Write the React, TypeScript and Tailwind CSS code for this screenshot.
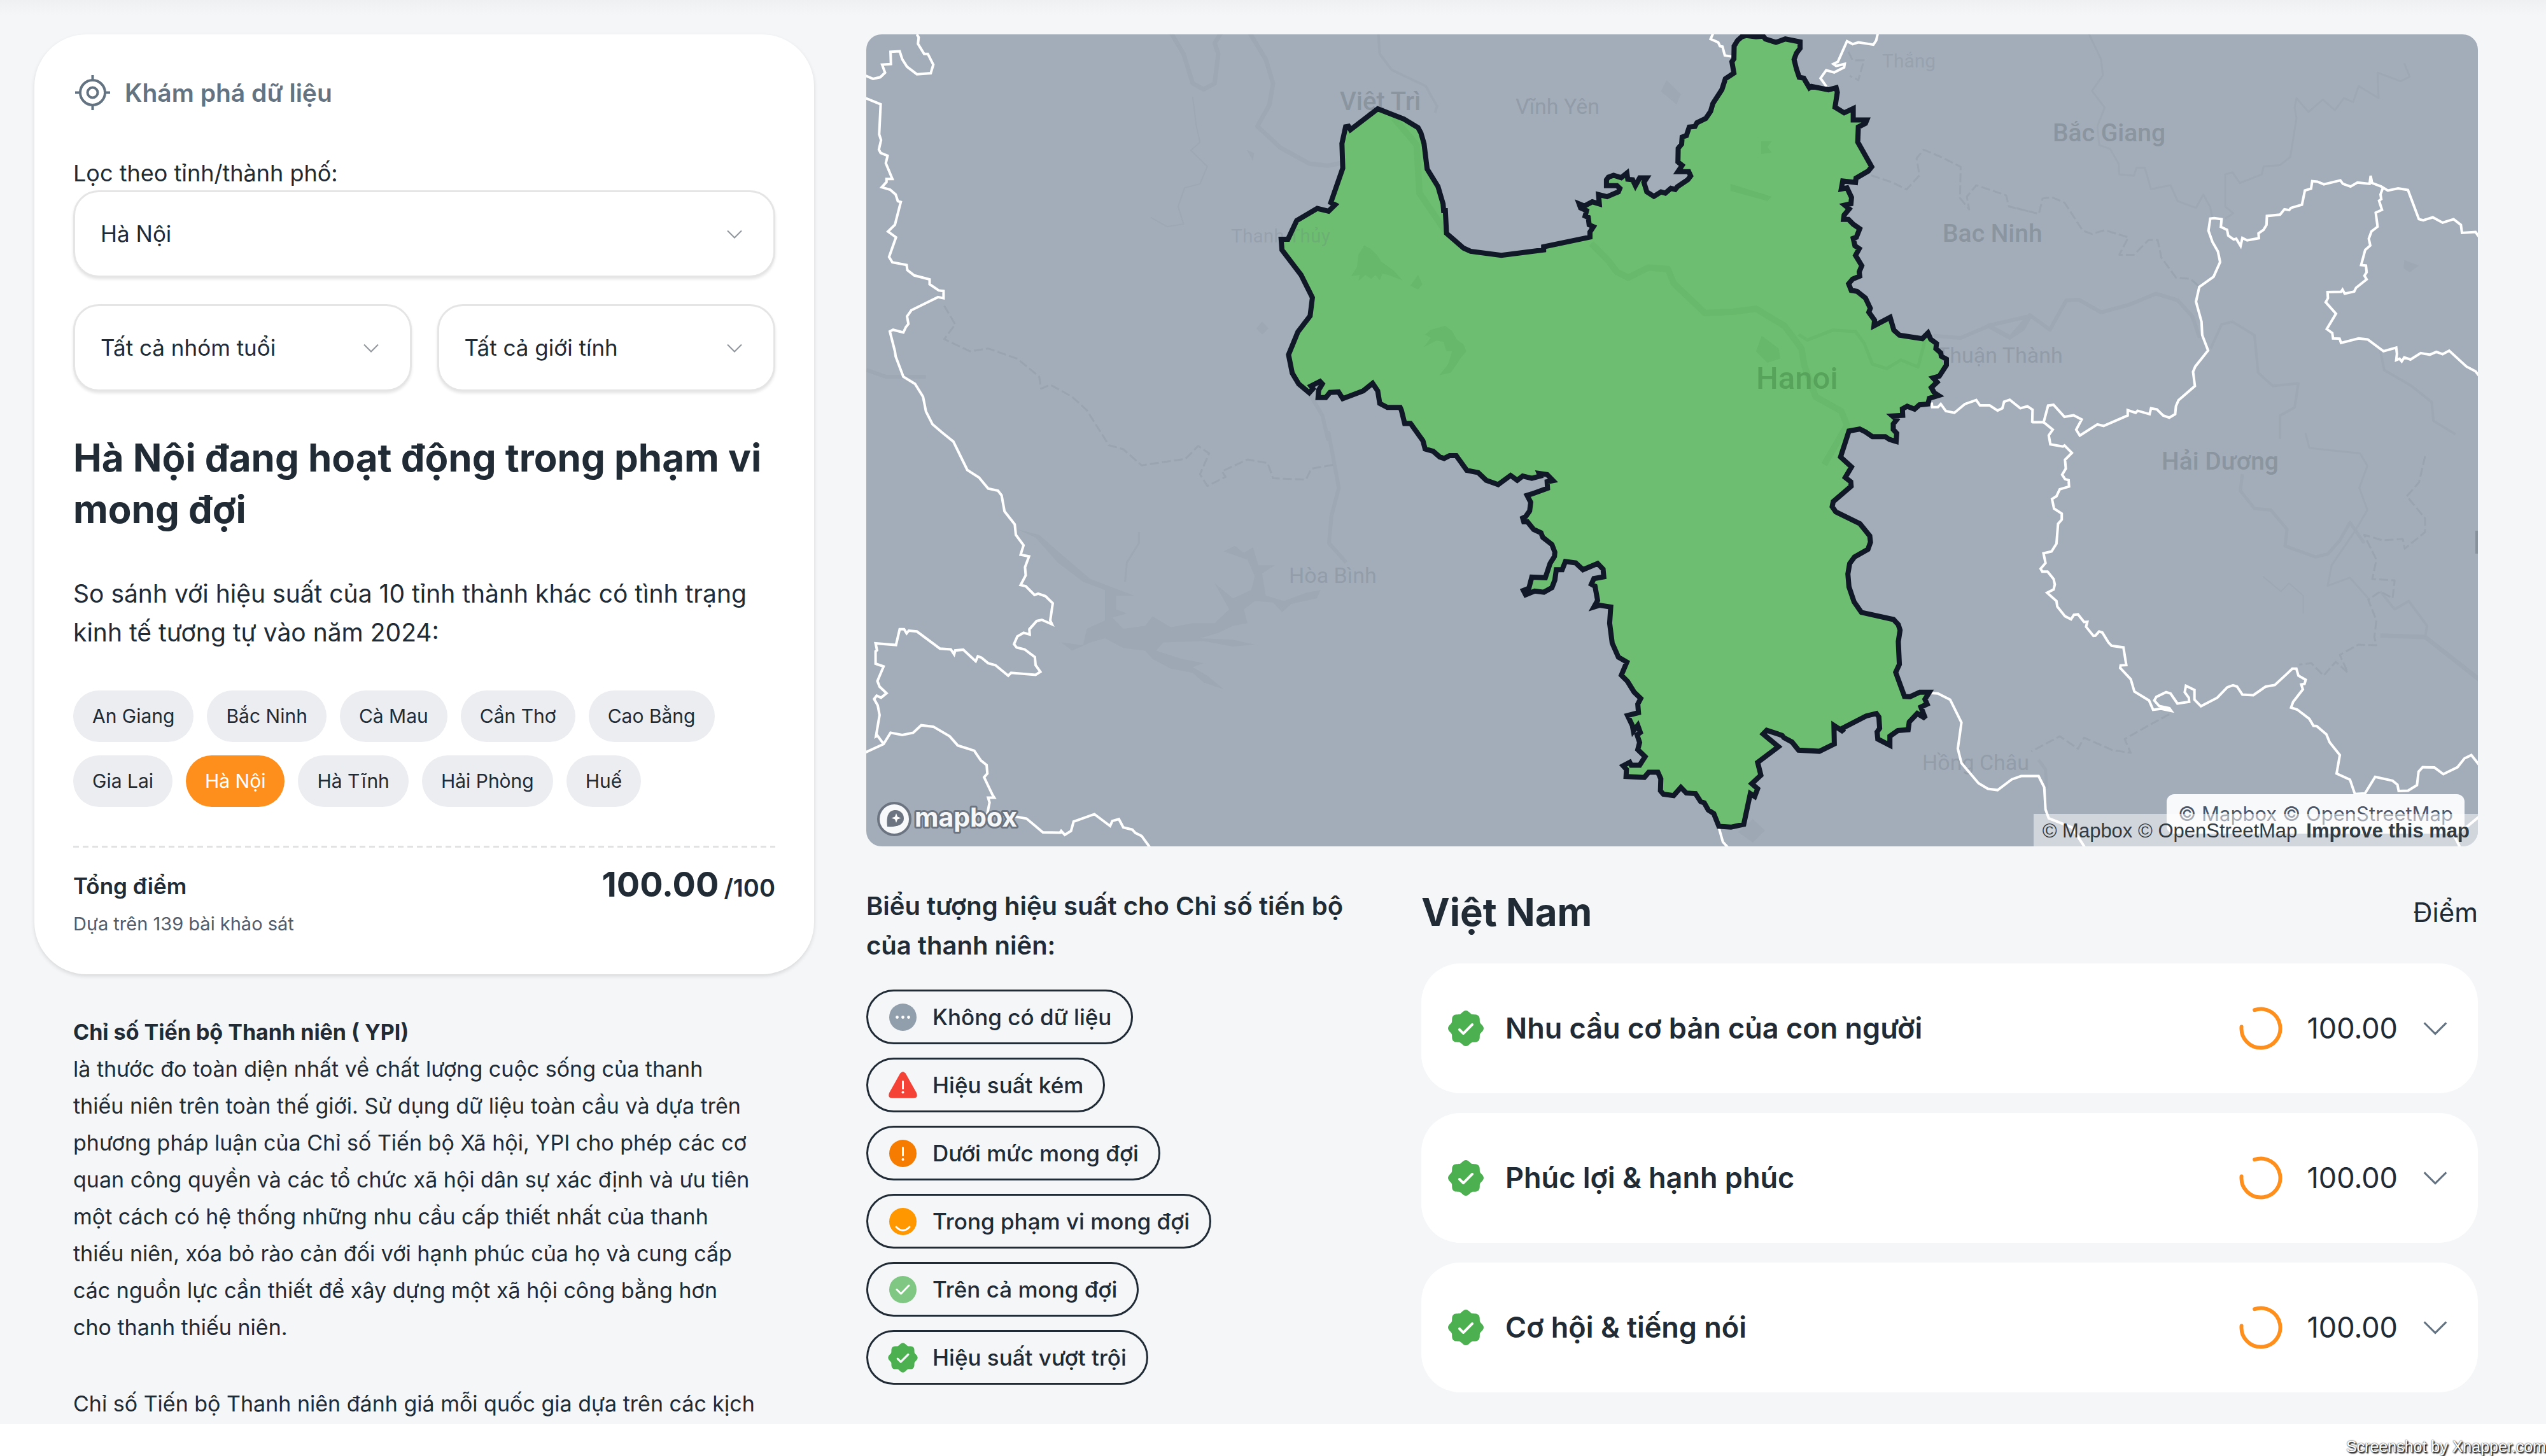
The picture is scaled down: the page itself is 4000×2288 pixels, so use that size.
import React from "react";
import { PiSealCheckFill } from "react-icons/pi";

/* ---------- Map geometry ---------- */

type Tile = [x: number, y: number, sx: number, sy: number];

// Survey sheets: origin and unit size of each sheet on the map canvas.
const NW: Tile = [1340, 30, 0.574, 0.4209];
const N: Tile = [1940, 30, 0.4464, 0.4209];
const CENTER: Tile = [2500, 30, 0.4464, 0.4464];
const S: Tile = [2200, 640, 0.574, 0.4464];
const NE: Tile = [3100, 30, 0.574, 0.4209];
const SE: Tile = [3000, 680, 0.6378, 0.4337];
const SW: Tile = [1340, 680, 0.574, 0.4337];

type Piece = [Tile, string];

const project = (pieces: Piece[]) =>
  pieces
    .map(([[ox, oy, sx, sy], pts]) =>
      pts
        .trim()
        .split(/\s+/)
        .map((p) => {
          const [x, y] = p.split(",").map(Number);
          return `${(ox + x * sx).toFixed(1)},${(oy + y * sy).toFixed(1)}`;
        })
        .join(" ")
    )
    .join(" ");

const HANOI: Piece[] = [
  [N, "503,335 595,373 645,405 655,425 666,465 677,560 715,625 733,690 735,715 741,715 745,800 805,855 830,867 938,882 1087,862 1087,850 1250,814 1250,795 1262,775 1247,768 1244,740 1233,735 1238,715 1217,705 1212,690 1230,698 1258,682 1283,690 1280,655 1310,663 1350,645 1355,632 1345,622 1308,622 1308,600 1315,590 1333,583 1360,592 1380,575 1383,598 1400,600 1410,622 1425,593 1450,593 1440,610 1450,645 1475,662 1500,645 1515,650 1535,632 1550,636"],
  [CENTER, "303,590 340,565 350,552 343,537 305,537 320,515 305,503 306,455 318,440 320,415 335,410 345,380 365,378 372,365 403,350 420,325 428,297 460,248 472,210 502,190 495,150 502,140 503,95 515,75 530,62 545,58 580,62 605,60 613,70 650,82 683,70 735,80 735,103 722,120 714,142 722,175 732,205 748,208 768,242 775,237 835,249 862,242 866,258 858,310 890,330 922,315 922,355 970,355 965,367 940,380 938,433 987,520 975,535 932,560 930,575 885,570 880,598 900,594 916,628 914,650 892,655 908,668 890,690 888,705 905,705 922,722 945,738 933,768 922,772 928,798 943,808 930,832 952,868 943,890 945,905 920,915 906,932 915,955 935,958 965,982 982,1018 977,1032 997,1060 995,1080 1052,1050 1065,1095 1085,1113 1165,1125 1185,1105 1195,1127 1215,1142 1213,1160 1230,1175 1232,1187 1250,1197 1250,1218 1225,1257 1203,1263 1217,1278 1197,1297 1207,1315 1222,1325 1190,1335 1185,1355 1155,1358 1138,1373 1112,1363 1095,1372 1096,1395 1060,1397 1075,1410 1063,1425 1063,1445 1075,1458 1073,1487 1050,1480 1035,1470 990,1470 965,1453 945,1443 907,1450"],
  [S, "1205,175 1235,210 1218,247 1233,262 1234,278 1185,332 1182,350 1192,368 1258,410 1285,453 1287,475 1280,500 1243,527 1230,550 1225,587 1228,632 1242,685 1262,722 1350,747 1363,765 1368,785 1363,825 1366,905 1356,933 1380,1018 1395,1019 1422,1003 1448,1003 1436,1028 1442,1045 1425,1055 1437,1095 1415,1078 1393,1108 1390,1135 1362,1138 1340,1158 1340,1190 1307,1168 1305,1143 1312,1130 1310,1090 1303,1078 1275,1087 1210,1130 1213,1142 1187,1120 1188,1185 1147,1211 1090,1207 1072,1178 1050,1163 1045,1155 1003,1137 993,1150 1035,1195 978,1250 987,1295 962,1325 978,1343 970,1370 958,1360 940,1468 905,1478 872,1475 858,1430 843,1418 832,1393 822,1388 808,1360 783,1358 768,1338 748,1367 720,1362 712,1350 713,1308 705,1285 680,1285 668,1303 618,1300 619,1275 610,1262 628,1250 632,1260 655,1260 670,1230 650,1205 655,1180 648,1153 657,1145 650,1120 638,1140 635,1120 622,1085 652,1075 650,1045 658,1025 640,1003 622,965 605,943 620,897 597,880 580,830 573,760 576,703 545,697 530,703 540,680 533,630 523,623 530,603 557,597 555,570 540,550 500,572 480,548 452,543 443,572 427,572 423,608 415,635 393,651 368,647 343,660 337,645 352,637 360,598 397,600 410,550 422,525 423,510 415,483 390,458 385,442 365,430 348,403 338,403 335,390 343,385 354,365 357,335 347,310 360,305 403,285 402,262 418,258 402,237 380,233 383,242 360,250 335,242 320,257 302,240 268,272 235,257 213,230 182,222 153,170 135,170 120,180 108,175 90,155 68,147 62,118 28,57 12,57 3,10"],
  [N, "582,1450 537,1450 510,1435 503,1388 485,1360 452,1388 380,1417 365,1392 335,1394 320,1413 293,1413 295,1385 308,1362 300,1353 268,1370 275,1380 262,1395 225,1362 202,1322 189,1253 222,1168 265,1108 273,1040 233,955 166,862 163,822 187,822 218,752 290,707 330,717 353,693 338,685 380,557 377,465 390,402 400,400 407,413"],
];

const PROVINCE_BORDERS: Piece[][] = [
  [[NW, "175,57 180,68 178,92 195,130 205,130 220,170 213,202 175,206 148,178 135,150 128,120 103,122 104,168 80,170 88,200 75,217 55,223 33,210"]],
  [
    [NW, "33,294 76,318 72,430 77,452 71,487 76,500 95,510 90,538 108,597 92,597 92,608 79,628 102,637 117,655 123,680 131,683 115,768 96,793 118,815 99,888 108,908 147,918 149,937 168,957 210,972 210,990 235,1013 248,1015 248,1042 233,1038 160,1087 148,1110 152,1138 145,1150 138,1170 110,1160 101,1166 115,1240 117,1260 138,1335 170,1362 192,1410 200,1465 218,1513"],
    [SW, "245,0 275,32 313,135 345,162 370,202 397,210 407,227 415,285 443,332 446,370 467,408 459,442 482,448 471,487 473,517 459,552 473,556 497,588 507,583 527,592 547,618 540,680 545,694 517,678 503,682 483,712 484,731 467,725 450,738 441,766 448,778 470,785 498,813 500,842 513,866 500,877 433,870 425,880 390,842 370,835 352,815 342,810 336,828 302,786 280,789 277,803 268,785 238,782 175,720 153,717 147,727 140,712 128,712 118,769 62,763 66,788 62,792 62,837 84,847 67,900 73,920 92,944 77,960 65,953 58,965 68,988 73,1023 63,1100 67,1097 84,1128"],
  ],
  [[SW, "30,1161 84,1128 103,1087 135,1095 165,1087 187,1060 220,1065 265,1100 287,1133 332,1152 350,1187 366,1204 368,1235 359,1248 382,1312 387,1322 370,1322 374,1340 367,1385 440,1390 475,1398 520,1448 567,1449 570,1443 580,1457 597,1443 604,1409 661,1382 704,1425 710,1407 728,1400 740,1430 765,1438 773,1450 790,1461 815,1506"]],
  [[CENTER, "430,48 420,70 447,82 453,95 462,97 470,128 495,132"]],
  [[CENTER, "1009,48 1003,75 993,90 940,82 920,88 900,78 868,150 852,158 862,165 892,158 890,170 855,188 827,180 807,208 828,238"]],
  [
    [CENTER, "1198,1350 1200,1366 1220,1366 1230,1355 1248,1380 1278,1386 1315,1355 1355,1341 1368,1360 1402,1360 1430,1378 1447,1370 1453,1347 1473,1340 1510,1370 1535,1363 1553,1375 1552,1418"],
    [NE, "163,1505 193,1505 205,1443 220,1440 250,1485 275,1479 297,1495 282,1533 292,1555 340,1513 357,1519 423,1480 423,1460 445,1470 450,1462 483,1475 487,1453 503,1457 520,1480 537,1488 553,1475 555,1445 562,1423 607,1370 602,1317 608,1297 643,1237 627,1180 625,1130 610,1055 619,1000 658,962 676,907 670,868 655,832 644,790 649,745 660,743 680,747 678,776 695,787 698,808 713,823 720,820 732,847 737,817 750,826 782,818 781,800 795,787 803,768 804,735 840,730 852,710 865,713 870,705 900,693 908,640 925,633 928,605 942,607 960,617 1005,602 1012,615 1033,625 1052,610 1085,615 1088,585 1092,612 1117,625 1135,640 1163,632 1190,638 1220,747 1232,751 1258,740 1285,760 1315,747 1335,768 1338,798 1375,795 1386,816"],
  ],
  [[NE, "1122,628 1115,655 1117,672 1111,678 1119,712 1102,723 1107,775 1090,793 1083,820 1087,845 1073,862 1062,918 1075,920 1077,945 1071,958 1077,972 1048,1003 1043,1017 1017,1025 1011,1010 1007,1018 970,1019 971,1042 965,1057 993,1100 968,1157 983,1172 985,1192 1003,1193 1007,1209 1055,1192 1080,1196 1123,1240 1158,1227 1160,1250 1158,1273 1167,1268 1173,1278 1180,1263 1197,1271 1225,1247 1250,1253 1268,1242 1285,1251 1303,1238 1350,1297 1375,1315 1386,1334"]],
  [
    [NE, "193,1505 218,1533 208,1552"],
    [SE, "343,10 347,42 378,50 382,46 400,73 383,98 385,130 376,152 383,168 392,172 393,195 370,205 362,230 351,240 356,275 375,293 375,315 366,330 362,402 350,430 330,437 335,472 323,493 327,503 340,503 355,530 358,550 355,568 339,580 362,610 364,630 383,665 398,676 405,660 415,658 430,686 438,685 435,703 453,736 458,735 467,720 475,724 490,760 498,772 527,778 534,842 520,843 519,852 545,893 554,938 590,970 600,1004 620,1000 645,1008 640,998 615,990 603,970 608,957 632,940 643,945 660,981 689,975 688,960 678,940 681,917 702,932 702,967 718,991 758,960 783,922 797,915 807,920 820,949 847,951 877,920 900,914 930,873 943,855 953,855 958,880 976,895 973,910 965,912 969,930 945,975 940,996 955,1003 985,1037 995,1062 1003,1063 1027,1093 1035,1122 1060,1168 1052,1235 1085,1257 1097,1309 1122,1307 1147,1247 1190,1261 1202,1275 1205,1298 1228,1297 1250,1277 1254,1228 1264,1212 1293,1213 1315,1237 1350,1212 1367,1180 1384,1168 1404,1205"],
  ],
  [[SE, "52,943 70,945 100,967 128,1050 119,1145 128,1197 170,1270 193,1290 217,1295 252,1256 275,1244 318,1244 332,1285 335,1365 343,1397 400,1430 433,1505"]],
  [[SE, "1404,1390 1375,1425 1340,1455 1357,1505"]],
  [[S, "872,1480 883,1530 897,1550"]],
];

const RIVERS: { w: number; d: Piece[] }[] = [
  { w: 7, d: [[NW, "870,50 905,130 930,240 960,262 990,240 1000,130 990,90 1008,50"]] },
  { w: 7, d: [[NW, "1085,50 1130,150 1150,240 1140,320 1107,400 1170,480 1250,540 1300,547 1345,535"]] },
  { w: 4, d: [[NW, "1438,50 1442,130 1475,190 1568,250"], [N, "690,285 712,325 705,350"]] },
  { w: 2, d: [[NW, "930,290 940,400 950,460 925,490 970,550 950,615 908,630 890,700 905,765 860,775 815,740"]] },
  { w: 6, d: [[NW, "1250,1400 1285,1480 1300,1568"], [SW, "1302,0 1330,200 1310,300 1303,400 1350,470"]] },
  { w: 6, d: [[NW, "37,1310 90,1335 200,1335"]] },
  { w: 3, d: [[SW, "783,360 783,400 750,470 745,540"]] },
  { w: 6, d: [[CENTER, "1205,1115 1300,1122 1400,1080 1475,1120 1520,1090 1545,1045"], [NE, "40,1145 100,1190 155,1105 210,1160 255,1050 290,1048 350,1095 430,1065 500,1025 560,1050 600,1110 620,1190"]] },
  { w: 3, d: [[NE, "315,50 350,150 355,210 325,268 360,330 340,400 345,470 375,485 398,540 400,580 440,585 447,555 470,555 487,635 540,620 560,680 610,705 630,655 648,700 655,740"]] },
  { w: 3, d: [[NE, "690,745 712,725 690,700 690,580 710,572 730,612 790,580 795,550 840,545 868,515 885,370 880,330 885,295 918,347 957,300 990,340 1015,295 1040,310 1055,250 1110,295 1107,200 1170,232 1195,215 1180,165"]] },
  { w: 4, d: [[NE, "650,1230 680,1140 710,1130 770,1180 780,1320 820,1370 890,1360 880,1450 840,1480 840,1568"]] },
  { w: 4, d: [[NE, "1115,1240 1125,1310 1200,1370 1255,1430 1260,1500 1320,1550"]] },
  { w: 5, d: [[SE, "820,150 815,210 850,275 890,280 930,350 925,410 1000,450 1030,440 1060,390 1085,325 1120,400"]] },
  { w: 3, d: [[SE, "975,0 985,55 1110,75 1128,120 1108,200 1128,280 1100,350 1040,480 1030,555 1085,525 1130,600"]] },
  { w: 7, d: [[SE, "1160,735 1270,740 1404,895"]] },
  { w: 4, d: [[SE, "1270,740 1275,700 1230,610 1195,640 1160,575"]] },
  { w: 2, d: [[SE, "870,520 915,575 935,545 970,590 970,655"]] },
  { w: 5, d: [[SE, "318,1185 335,1220 338,1290"]] },
];

const DISTRICTS: Piece[][] = [
  [[NW, "250,1070 280,1140 250,1195 320,1240 370,1230 450,1268 510,1335 515,1380 540,1365 600,1410 640,1460 690,1568"], [SW, "700,45 740,60 790,118 910,95 945,48 975,75 950,150 970,193 1020,160 1010,140 1080,97 1135,110 1150,165 1240,170 1255,130 1320,115"]],
  [[CENTER, "985,550 1060,575 1110,600 1155,550 1145,490 1170,460 1230,485 1300,520 1298,630 1330,670 1322,625 1355,585 1460,620 1470,660 1560,682"], [NE, "100,700 180,727 190,670 215,665 250,685 300,790 325,802 360,788 425,815 400,880 440,880 480,825 505,825 515,890 555,965 595,970 620,1000"]],
  [[SE, "1270,85 1255,180 1225,230 1270,310 1270,360 1220,420 1215,385 1165,390 1120,370 1150,460 1140,530 1195,535 1190,600 1160,575 1130,605 1150,680 1145,740 1150,770 1105,768 1060,805 1080,870 1050,830 1020,880 990,835 960,840"]],
  [[SE, "640,1020 590,1060 530,1110 545,1160 500,1150 430,1105 415,1145 370,1100 300,1155"]],
  [[CENTER, "905,115 920,145 960,145 940,215 910,200"]],
];

const LAKES: Piece[][] = [
  [[SW, "450,350 510,370 570,440 650,530 710,560 770,590 720,590 720,640 750,655 710,670 740,710 800,700 820,665 870,705 930,690 990,690 1030,640 990,545 1040,600 1090,570 1100,520 1080,460 1015,430 1045,410 1070,435 1095,415 1110,480 1155,480 1120,510 1130,590 1180,610 1240,580 1280,570 1270,600 1200,620 1175,650 1150,615 1100,610 1070,640 1080,690 1040,700 1000,725 950,745 1040,750 1100,768 1040,775 960,755 850,760 830,790 900,820 960,835 930,850 970,880 1015,930 960,905 930,870 870,855 820,820 800,790 740,780 690,745 650,760 600,790 570,760 630,770 640,710 690,680 690,600 690,570 630,540 560,470 500,380"]],
  [[CENTER, "265,215 315,265 300,300 245,255"]],
  [[NE, "1180,900 1220,920 1195,945 1178,930"]],
  [[S, "965,1450 998,1490 965,1532 925,1495"]],
  [[NW, "1078,488 1098,500 1095,530"]],
  [[NW, "1120,1130 1138,1155 1120,1178 1104,1155"]],
];

const GREEN_RIVERS: { w: number; d: Piece[] }[] = [
  { w: 10, d: [[CENTER, "0,790 60,850 90,890 130,910 200,875 270,880 290,930 400,1035 500,1030 580,1020 680,1080 740,1160 750,1220 790,1330 880,1380 900,1430 860,1500 820,1568"]] },
  { w: 5, d: [[CENTER, "730,1110 760,1130 850,1095 930,1100 960,1140 990,1215 1040,1230 1090,1200 1150,1225 1175,1130"]] },
  { w: 10, d: [[N, "560,370 640,470 650,650 740,790"]] },
];

const GREEN_LAKES: Piece[][] = [
  [[CENTER, "600,1115 660,1160 665,1195 620,1210 580,1170"]],
  [[CENTER, "490,580 635,625 620,640 490,605"]],
  [[CENTER, "598,430 635,430 620,450 635,470 598,475"]],
  [[N, "455,845 475,855 500,880 515,905 560,940 590,975 565,965 540,955 520,950 510,975 495,955 480,970 460,955 435,978 440,955 410,960 430,925 435,880"]],
  [[N, "690,1160 740,1145 765,1165 780,1195 805,1215 815,1240 795,1265 780,1290 760,1320 720,1330 750,1290 765,1240 745,1240 735,1205 710,1200 665,1225 690,1190 670,1178"]],
  [[N, "645,955 660,990 645,1010 618,995"]],
];

const PLACES: { name: string; x: number; y: number; size: number; fill: string }[] = [
  { name: "Việt Trì", x: 2105, y: 173, size: 40, fill: "#8a95a0" },
  { name: "Vĩnh Yên", x: 2381, y: 179, size: 34, fill: "#919ca8" },
  { name: "Thanh Thủy", x: 1934, y: 381, size: 30, fill: "#6b7a8438" },
  { name: "Thắng", x: 2957, y: 106, size: 30, fill: "#97a2ae" },
  { name: "Bắc Giang", x: 3225, y: 222, size: 39, fill: "#8a95a0" },
  { name: "Bac Ninh", x: 3052, y: 380, size: 39, fill: "#8a95a0" },
  { name: "Thuận Thành", x: 3043, y: 570, size: 34, fill: "#919ca8" },
  { name: "Hải Dương", x: 3396, y: 738, size: 39, fill: "#8a95a0" },
  { name: "Hồng Châu", x: 3020, y: 1210, size: 34, fill: "#929da9" },
  { name: "Hòa Bình", x: 2025, y: 916, size: 34, fill: "#929da9" },
  { name: "Hanoi", x: 2759, y: 611, size: 49, fill: "#57a35b" },
];

function ProvinceMap() {
  return (
    <svg
      viewBox="1361 54 2532 1276"
      preserveAspectRatio="xMidYMid slice"
      className="block h-full w-full"
      role="img"
      aria-label="Bản đồ Hà Nội"
      fontFamily="Roboto, sans-serif"
    >
      <rect x="1361" y="54" width="2532" height="1276" fill="#a3adb9" />
      {LAKES.map((p, i) => (
        <polygon key={i} points={project(p)} fill="#9da8b4" />
      ))}
      <g fill="none" stroke="#9da8b4" strokeLinejoin="round">
        {RIVERS.map((r, i) => (
          <polyline key={i} points={project(r.d)} strokeWidth={r.w} />
        ))}
        {DISTRICTS.map((p, i) => (
          <polyline key={i} points={project(p)} stroke="#99a4b0" strokeWidth="3" strokeDasharray="14 5" />
        ))}
      </g>
      <polygon points={project(HANOI)} fill="#6dbe70" />
      <g fill="none" stroke="#68b96b" strokeLinejoin="round">
        {GREEN_RIVERS.map((r, i) => (
          <polyline key={i} points={project(r.d)} strokeWidth={r.w} />
        ))}
      </g>
      {GREEN_LAKES.map((p, i) => (
        <polygon key={i} points={project(p)} fill="#67b86a" />
      ))}
      {PLACES.map((p) => (
        <text key={p.name} x={p.x} y={p.y} fontSize={p.size} fill={p.fill} fontWeight={p.size > 38 ? 500 : 400}>
          {p.name}
        </text>
      ))}
      <g fill="none" stroke="#ffffff" strokeWidth="4" strokeLinejoin="miter">
        {PROVINCE_BORDERS.map((p, i) => (
          <polyline key={i} points={project(p)} />
        ))}
      </g>
      <polygon points={project(HANOI)} fill="none" stroke="#111827" strokeWidth="8" strokeMiterlimit="3" />
      <rect x="3889" y="834" width="4" height="36" fill="#87929d" />
    </svg>
  );
}

/* ---------- Icons ---------- */

function TargetIcon() {
  return (
    <svg viewBox="0 0 61 61" className="size-[61px]" fill="none" stroke="currentColor" strokeWidth="4" aria-hidden="true">
      <circle cx="30.5" cy="30.5" r="19.5" />
      <circle cx="30.5" cy="30.5" r="8" />
      <path d="M30.5 3v8M30.5 50v8M3 30.5h8M50 30.5h8" />
    </svg>
  );
}

function Chevron({ className }: { className: string }) {
  return (
    <svg viewBox="0 0 24 14" className={className} fill="none" stroke="currentColor" strokeWidth="2" aria-hidden="true">
      <path d="M1 1.5l11 11 11-11" />
    </svg>
  );
}

type Level = "none" | "poor" | "below" | "within" | "above" | "over";

function LevelIcon({ level }: { level: Level }) {
  if (level === "over") return <PiSealCheckFill className="size-[53px] text-[#4caf50]" aria-hidden="true" />;
  return (
    <svg viewBox="-26.5 -26.5 53 53" className="size-[53px]" aria-hidden="true" stroke="#fff" strokeWidth="3" strokeLinecap="round" strokeLinejoin="round" fill="none">
      {level === "none" && (
        <>
          <circle r="21.5" fill="#919eab" stroke="none" />
          <g fill="#fff" stroke="none">
            <circle cx="-9" r="2.4" />
            <circle r="2.4" />
            <circle cx="9" r="2.4" />
          </g>
        </>
      )}
      {level === "poor" && (
        <>
          <path d="M-5 -17.5Q0 -25 5 -17.5L21.5 12Q24.5 20 16.5 20H-16.5Q-24.5 20 -21.5 12Z" fill="#f44336" stroke="none" />
          <path d="M0 -6V5" />
          <circle cy="11" r="2" fill="#fff" stroke="none" />
        </>
      )}
      {level === "below" && (
        <>
          <circle r="21.5" fill="#f57c00" stroke="none" />
          <path d="M0 -9V3" />
          <circle cy="9.5" r="2" fill="#fff" stroke="none" />
        </>
      )}
      {level === "within" && (
        <>
          <circle r="21.5" fill="#ff9800" stroke="none" />
          <path d="M-10.5 8.5Q0 19.5 10.5 8.5" />
        </>
      )}
      {level === "above" && (
        <>
          <circle r="21.5" fill="#81c784" stroke="none" />
          <path d="M-9.5 0L-3 6.5L9.5 -6.5" />
        </>
      )}
    </svg>
  );
}

function ScoreRing() {
  return (
    <svg viewBox="-36 -36 72 72" className="size-[72px]" fill="none" aria-hidden="true">
      <path d="M-9.9 -28.8A30.5 30.5 0 1 1 -30.4 -2.5" stroke="#ff8f1c" strokeWidth="6" strokeLinecap="round" />
    </svg>
  );
}

/* ---------- Controls ---------- */

function Select({ id, label, options }: { id: string; label?: string; options: string[] }) {
  return (
    <div className="relative">
      <select
        id={id}
        aria-label={label}
        className="h-[137px] w-full appearance-none rounded-[40px] border-[3px] border-[#e5e5e5] bg-white pl-10 pr-24 text-[35px] text-[#212b36] shadow-[0_3px_4px_rgba(0,0,0,0.1)]"
      >
        {options.map((o) => (
          <option key={o}>{o}</option>
        ))}
      </select>
      <Chevron className="pointer-events-none absolute right-[52px] top-1/2 h-[14px] w-6 -translate-y-1/2 text-[#8f959b]" />
    </div>
  );
}

const PEERS = ["An Giang", "Bắc Ninh", "Cà Mau", "Cần Thơ", "Cao Bằng", "Gia Lai", "Hà Nội", "Hà Tĩnh", "Hải Phòng", "Huế"];

const LEVELS: { level: Level; label: string }[] = [
  { level: "none", label: "Không có dữ liệu" },
  { level: "poor", label: "Hiệu suất kém" },
  { level: "below", label: "Dưới mức mong đợi" },
  { level: "within", label: "Trong phạm vi mong đợi" },
  { level: "above", label: "Trên cả mong đợi" },
  { level: "over", label: "Hiệu suất vượt trội" },
];

const DIMENSIONS = ["Nhu cầu cơ bản của con người", "Phúc lợi & hạnh phúc", "Cơ hội & tiếng nói"];

function Sidebar() {
  return (
    <aside>
      <section className="rounded-[82px] bg-white px-[61px] pb-14 pt-[61px] shadow-[0_3px_6px_rgba(0,0,0,0.12)]">
        <div className="flex items-center gap-5 text-[#637381]">
          <TargetIcon />
          <h2 className="text-[39px] font-semibold leading-[61px]">Khám phá dữ liệu</h2>
        </div>
        <label htmlFor="province" className="mt-[69px] block text-[36px] leading-[54px]">
          Lọc theo tỉnh/thành phố:
        </label>
        <Select id="province" options={["Hà Nội"]} />
        <div className="mt-[42px] grid grid-cols-2 gap-10">
          <Select id="age" label="Nhóm tuổi" options={["Tất cả nhóm tuổi"]} />
          <Select id="gender" label="Giới tính" options={["Tất cả giới tính"]} />
        </div>
        <h1 className="mt-16 text-[60px] font-bold leading-[81px]">Hà Nội đang hoạt động trong phạm vi mong đợi</h1>
        <p className="mt-[61px] text-[39px] leading-[61px]">
          So sánh với hiệu suất của 10 tỉnh thành khác có tình trạng kinh tế tương tự vào năm 2024:
        </p>
        <div className="mt-[61px] flex flex-wrap gap-[21px]">
          {PEERS.map((name) => (
            <button
              key={name}
              type="button"
              className={`h-[81px] rounded-full px-[30px] text-[30px] ${
                name === "Hà Nội" ? "bg-[#ff8f1c] text-white" : "bg-[#ecedf1]"
              }`}
            >
              {name}
            </button>
          ))}
        </div>
        <hr className="mt-[61px] h-[3px] border-0 bg-[repeating-linear-gradient(90deg,#e0e2e4_0_9px,transparent_9px_15px)]" />
        <div className="mt-[33px] flex h-[54px] items-center justify-between text-[35px] font-semibold leading-[54px]">
          <span>Tổng điểm</span>
          <span className="flex items-baseline gap-2">
            <span className="text-[54px] font-bold">100.00</span>
            <span className="text-[38px]">/100</span>
          </span>
        </div>
        <p className="mt-[10px] text-[29px] leading-[46px] text-[#525c6b]">Dựa trên 139 bài khảo sát</p>
      </section>
      <section className="pl-[61px] pr-[54px] pt-[62px] text-[34px] leading-[58px]">
        <h3 className="font-bold">Chỉ số Tiến bộ Thanh niên ( YPI)</h3>
        <p className="pr-11">
          là thước đo toàn diện nhất về chất lượng cuộc sống của thanh thiếu niên trên toàn thế giới. Sử dụng dữ liệu
          toàn cầu và dựa trên phương pháp luận của Chỉ số Tiến bộ Xã hội, YPI cho phép các cơ quan công quyền và các tổ
          chức xã hội dân sự xác định và ưu tiên một cách có hệ thống những nhu cầu cấp thiết nhất của thanh thiếu niên,
          xóa bỏ rào cản đối với hạnh phúc của họ và cung cấp các nguồn lực cần thiết để xây dựng một xã hội công bằng
          hơn cho thanh thiếu niên.
        </p>
        <p className="mt-[62px]">Chỉ số Tiến bộ Thanh niên đánh giá mỗi quốc gia dựa trên các kịch</p>
      </section>
    </aside>
  );
}

function MapPanel() {
  return (
    <div className="relative h-[1276px] overflow-hidden rounded-3xl">
      <ProvinceMap />
      <a href="#mapbox" aria-label="Mapbox" className="absolute bottom-3 left-[17px] flex items-center">
        <svg viewBox="0 0 240 64" className="h-16 w-60" aria-hidden="true">
          <circle cx="27" cy="33" r="25" fill="#fff" fillOpacity="0.92" stroke="#6b7480" strokeWidth="4" />
          <path d="M16 45C14 28 18 19 29 19A13 13 0 0 1 42 32C42 42 32 46 16 45Z" fill="#6b7480" />
          <path d="M30 24l2 5.5 5.5 2-5.5 2-2 5.5-2-5.5-5.5-2 5.5-2z" fill="#fff" />
          <text
            x="59"
            y="45"
            fontFamily="Inter, sans-serif"
            fontWeight="700"
            fontSize="41"
            fill="#f4f6f8"
            stroke="#6b7480"
            strokeWidth="6"
            strokeLinejoin="round"
            paintOrder="stroke"
          >
            mapbox
          </text>
        </svg>
      </a>
      <div className="absolute bottom-5 right-[21px] rounded-xl bg-[#f8f9fb] px-[18px] py-2 text-[31px] leading-[46px] text-[#4b5568]">
        © Mapbox © OpenStreetMap
      </div>
      <div className="absolute bottom-0 right-0 flex h-[51px] items-center gap-[14px] bg-white/50 pl-[14px] pr-[13px] pt-1 font-['Liberation_Sans',sans-serif] text-[31px] text-[#333b42]">
        <span>
          <a href="#mapbox">© Mapbox</a> <a href="#osm">© OpenStreetMap</a>
        </span>
        <a href="#improve" className="font-bold">
          Improve this map
        </a>
      </div>
    </div>
  );
}

export default function App() {
  return (
    <div className="flex min-h-screen flex-col bg-white font-[Inter,sans-serif] text-[#212b36]">
      <main className="grid flex-1 grid-cols-[1225px_minmax(0,1fr)] gap-x-[82px] bg-[#f4f6f8] bg-[linear-gradient(#eef0f2,#f4f6f8_24px)] pl-[54px] pr-[107px] pt-[54px]">
        <Sidebar />
        <div>
          <MapPanel />
          <div className="mt-[63px] grid grid-cols-[790px_minmax(0,1fr)] gap-x-[82px]">
            <section>
              <h3 className="text-[40px] font-semibold leading-[62px]">
                Biểu tượng hiệu suất cho Chỉ số tiến bộ của thanh niên:
              </h3>
              <ul className="mt-[38px] flex flex-col items-start gap-[21px]">
                {LEVELS.map(({ level, label }) => (
                  <li
                    key={level}
                    className="flex h-[86px] items-center gap-5 rounded-full border-[3px] border-[#212b36] pl-7 pr-[31px] text-[35px] font-medium"
                  >
                    <LevelIcon level={level} />
                    {label}
                  </li>
                ))}
              </ul>
            </section>
            <section>
              <div className="flex items-center justify-between">
                <h2 className="text-[60px] font-bold leading-[81px]">Việt Nam</h2>
                <span className="text-[42px]">Điểm</span>
              </div>
              <div className="mt-10 flex flex-col gap-[31px]">
                {DIMENSIONS.map((name) => (
                  <button
                    key={name}
                    type="button"
                    aria-expanded="false"
                    className="flex h-[204px] items-center rounded-[61px] bg-white pl-[38px] pr-12 text-left"
                  >
                    <PiSealCheckFill className="size-16 text-[#4caf50]" aria-hidden="true" />
                    <span className="ml-[30px] flex-1 text-[45px] font-semibold">{name}</span>
                    <ScoreRing />
                    <span className="ml-9 text-[45px]">100.00</span>
                    <Chevron className="ml-10 h-[22px] w-[38px] text-[#637381]" />
                  </button>
                ))}
              </div>
            </section>
          </div>
        </div>
      </main>
      <footer className="flex h-[50px] items-end justify-end text-[25px] leading-[29px]">
        <span className="font-['Liberation_Sans',sans-serif] text-white [text-shadow:2px_2px_2px_#000,0_0_2px_#000]">
          Screenshot by Xnapper.com
        </span>
      </footer>
    </div>
  );
}
